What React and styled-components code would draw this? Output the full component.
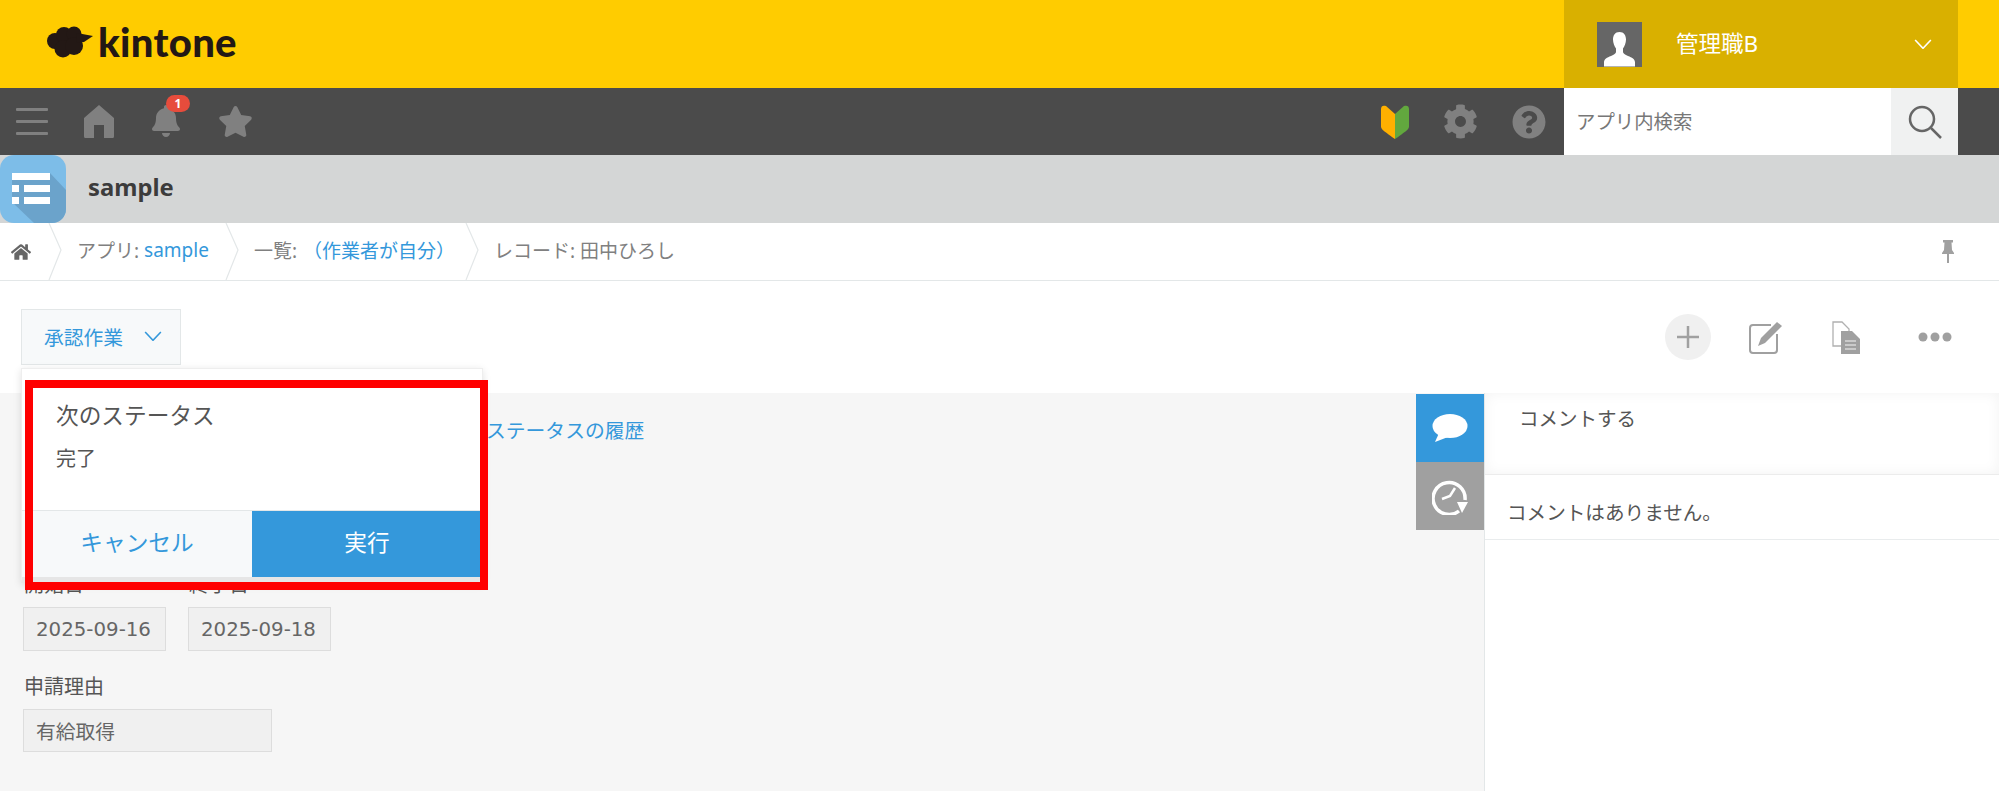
import styled, { createGlobalStyle } from "styled-components";
import { FaBell, FaCog, FaHome, FaQuestionCircle, FaStar } from "react-icons/fa";

const GlobalStyle = createGlobalStyle`
    html, body {
        margin: 0;
        padding: 0;
        height: 100%;
        overflow: hidden;
        background: #fff;
        font-family: "Noto Sans", "Noto Sans CJK JP", sans-serif;
        color: #555;
    }
    * {
        box-sizing: border-box;
    }
`;

const Page = styled.div`
    display: flex;
    flex-direction: column;
    height: 791px;
`;

const Header = styled.div`
    height: 88px;
    background: #ffcc00;
    display: flex;
    justify-content: space-between;
    padding-right: 41px;
`;

const Logo = styled.div`
    display: flex;
    align-items: center;
    gap: 5px;
    padding: 0 0 4px 47px;
    color: #231815;
`;

const LogoText = styled.span`
    font-family: "Lato", sans-serif;
    font-weight: 900;
    font-size: 40px;
    letter-spacing: 0.3px;
`;

const UserMenu = styled.div`
    width: 394px;
    background: #d9b000;
    display: flex;
    align-items: center;
    padding: 0 26px 0 33px;
    color: #fff;
`;

const Avatar = styled.div`
    width: 45px;
    height: 45px;
    background: #666;
    display: flex;
    align-items: flex-end;
    justify-content: center;
`;

const UserName = styled.span`
    flex: 1;
    margin-left: 34px;
    font-size: 22.5px;
    padding-bottom: 4px;
`;

const NavBar = styled.div`
    height: 67px;
    background: #4b4b4b;
    display: flex;
    align-items: center;
    justify-content: space-between;
    padding-right: 41px;
    color: #808080;
`;

const NavGroup = styled.div`
    display: flex;
    align-items: center;
    gap: ${props => props.$gap}px;
    padding-left: ${props => props.$left || 0}px;
`;

const Hamburger = styled.div`
    width: 32px;
    display: flex;
    flex-direction: column;
    gap: 9px;

    span {
        height: 3px;
        background: #808080;
        border-radius: 1px;
    }
`;

const BellWrap = styled.div`
    position: relative;
    height: 33px;
    font-size: 32px;
    line-height: 1;
`;

const Badge = styled.span`
    position: absolute;
    top: -10px;
    left: 16px;
    width: 24px;
    height: 17px;
    border-radius: 9px;
    background: #e74c3c;
    color: #fff;
    font-size: 12px;
    font-weight: 700;
    line-height: 17px;
    text-align: center;
`;

const SearchBox = styled.div`
    width: 394px;
    height: 67px;
    margin-left: -16px;
    display: flex;
    background: #fff;
`;

const SearchText = styled.div`
    flex: 1;
    padding-left: 12px;
    font-size: 19.4px;
    line-height: 67px;
    color: #777;
`;

const SearchButton = styled.div`
    width: 67px;
    background: #f0f1f1;
    display: flex;
    align-items: center;
    justify-content: center;
`;

const AppBar = styled.div`
    height: 68px;
    background: #d4d6d6;
    display: flex;
    align-items: center;
`;

const AppName = styled.h1`
    margin: 0 0 4px 22px;
    font-size: 23.8px;
    font-weight: 700;
    color: #3c3c3c;
`;

const Breadcrumb = styled.div`
    height: 58px;
    background: #fff;
    border-bottom: 1px solid #e3e7e8;
    display: flex;
    align-items: stretch;
    padding-right: 45px;
`;

const HomeCrumb = styled.div`
    width: 48px;
    padding-left: 11px;
    display: flex;
    align-items: center;
    color: #666;
    font-size: 20px;
`;

const Crumb = styled.div`
    width: ${props => props.$width}px;
    padding: 0 0 4px 15px;
    display: flex;
    align-items: center;
    gap: ${props => props.$gap}px;
    font-size: 19px;
    color: #808080;
    white-space: nowrap;
`;

const Link = styled.span`
    color: #3498db;
`;

const PinSlot = styled.div`
    margin-left: auto;
    display: flex;
    align-items: center;
`;

const Toolbar = styled.div`
    height: 112px;
    background: #fff;
    display: flex;
    align-items: center;
    justify-content: space-between;
    padding: 0 47px 0 21px;
    flex-shrink: 0;
    position: relative;
    z-index: 2;
`;

const ActionMenu = styled.div`
    position: relative;
`;

const ActionButton = styled.div`
    width: 160px;
    height: 56px;
    background: #f7f9fa;
    border: 1px solid #e3e7e8;
    display: flex;
    align-items: center;
    gap: 21px;
    padding: 0 0 2px 22px;
    font-size: 19.8px;
    color: #3498db;
`;

const Popup = styled.div`
    position: absolute;
    top: 59px;
    left: 0;
    width: 462px;
    background: #fff;
    border: 1px solid #eee;
    border-bottom: 6px solid #e6e6e6;
    box-shadow: 0 2px 8px rgba(0, 0, 0, 0.12);
`;

const PopupBody = styled.div`
    height: 141px;
    padding: 33px 0 0 34px;
`;

const PopupTitle = styled.div`
    font-size: 22.7px;
    line-height: 28px;
    color: #555;
`;

const PopupStatus = styled.div`
    margin-top: 15px;
    font-size: 20px;
    line-height: 28px;
    color: #555;
`;

const PopupFooter = styled.div`
    height: 67px;
    display: flex;
    border-top: 1px solid #e3e7e8;
`;

const FooterButton = styled.div`
    flex: 1;
    display: flex;
    align-items: center;
    justify-content: center;
    padding-bottom: 6px;
    font-size: 22.7px;
    background: ${props => props.$primary ? "#3498db" : "#f7f9fa"};
    color: ${props => props.$primary ? "#fff" : "#3498db"};
`;

const RedFrame = styled.div`
    position: absolute;
    top: 71px;
    left: 4px;
    width: 463px;
    height: 210px;
    border: 8px solid #ff0000;
`;

const ToolIcons = styled.div`
    display: flex;
    align-items: center;
`;

const ToolIcon = styled.div`
    width: ${props => props.$size || 46}px;
    height: 46px;
    margin-left: ${props => props.$left || 0}px;
    display: flex;
    align-items: center;
    justify-content: center;
    border-radius: 50%;
    background: ${props => props.$filled ? "#f0f0f0" : "transparent"};
`;

const Content = styled.div`
    flex: 1;
    display: flex;
    background: #f6f6f6;
    min-height: 0;
`;

const Main = styled.div`
    flex: 1;
    padding: 25px 0 0 23px;
`;

const StatusLink = styled.div`
    margin-left: 463px;
    font-size: 19.8px;
    line-height: 26px;
    color: #3498db;
`;

const FieldRow = styled.div`
    display: flex;
    gap: 22px;
    margin-top: ${props => props.$top}px;
`;

const Field = styled.div`
    display: flex;
    flex-direction: column;
`;

const FieldLabel = styled.div`
    font-size: 20px;
    line-height: 20px;
    margin: 0 0 12px 1px;
    color: #555;
`;

const FieldValue = styled.div`
    width: ${props => props.$width}px;
    height: ${props => props.$height}px;
    padding-left: 12px;
    display: flex;
    align-items: center;
    background: #f0f0f0;
    border: 1px solid #ddd;
    font-family: "DejaVu Sans", "Noto Sans CJK JP", sans-serif;
    font-size: 19.8px;
    color: #666;
`;

const Tabs = styled.div`
    width: 68px;
    padding-top: 1px;
`;

const Tab = styled.div`
    height: 68px;
    display: flex;
    align-items: center;
    justify-content: center;
    background: ${props => props.$active ? "#3498db" : "#a0a0a0"};
`;

const Sidebar = styled.div`
    width: 515px;
    background: #fff;
    border-left: 1px solid #e3e7e8;
`;

const CommentBox = styled.div`
    height: 82px;
    padding: 13px 0 0 34px;
    font-size: 19.5px;
    line-height: 26px;
    color: #555;
    border-bottom: 1px solid #ececec;
    box-shadow: inset 0 0 14px rgba(0, 0, 0, 0.05);
`;

const NoComments = styled.div`
    height: 65px;
    padding: 25px 0 0 22px;
    font-size: 19.6px;
    line-height: 26px;
    color: #555;
    border-bottom: 1px solid #e9eced;
`;

const CloudLogo = () => (
    <svg width="46" height="32" viewBox="0 0 46 32" fill="currentColor">
        <circle cx="8" cy="15" r="8" />
        <circle cx="17" cy="9" r="8" />
        <circle cx="27" cy="8" r="7.5" />
        <circle cx="16" cy="23" r="8.5" />
        <circle cx="27" cy="20" r="9" />
        <path d="M30 7l16 3-9 6-8 1z" />
    </svg>
);

const UserSilhouette = () => (
    <svg width="35" height="36" viewBox="0 0 35 36" fill="#fff">
        <path d="M17.5 1c-4.5 0-6.5 3.5-6.5 7.5 0 3.5 1.500 7 3 9v3.500c0 1.500-2 2.500-5 4-4 1.500-7 3-7 6.500v4h31v-4c0-3.500-3-5-7-6.500-3-1.500-5-2.500-5-4v-3.500c1.500-2 3-5.500 3-9 0-4-2-7.500-6.500-7.500z" />
    </svg>
);

const Chevron = ({ color, size = 18 }) => (
    <svg width={size} height={size * 0.6} viewBox="0 0 18 11" fill="none" stroke={color} strokeWidth="1.6">
        <path d="M1 1l8 8.500 8-8.500" />
    </svg>
);

const HouseIcon = () => (
    <svg width="30" height="33" viewBox="0 0 30 33" fill="#808080">
        <path d="M15 0L30 13V31.500a1.500 1.500 0 0 1-1.500 1.500H20V20H10V33H1.500A1.500 1.500 0 0 1 0 31.500V13Z" />
    </svg>
);

const BeginnerMark = () => (
    <svg width="28" height="34" viewBox="0 0 28 34">
        <path d="M14 9L5 1C2 0 0 1 0 4V21C0 24 1 25 14 34Z" fill="#ffb000" />
        <path d="M14 9L23 1C26 0 28 1 28 4V21C28 24 27 25 14 34Z" fill="#62a83e" />
    </svg>
);

const SearchIcon = () => (
    <svg width="34" height="34" viewBox="0 0 34 34" fill="none" stroke="#666" strokeWidth="2.500">
        <circle cx="14" cy="14" r="12" />
        <path d="M23 23l10 10" />
    </svg>
);

const AppIcon = () => (
    <svg width="66" height="68" viewBox="0 0 66 68">
        <rect width="66" height="68" rx="14" fill="#7dbde8" />
        <path d="M50 18L66 35V54a14 14 0 0 1-14 14H34L12 47V18Z" fill="#6ba3cb" />
        <path d="M12 18H50V25H12ZM12 30H19V37H12ZM24 30H50V37H24ZM12 42H19V49H12ZM24 42H50V49H24Z" fill="#fff" />
    </svg>
);

const CrumbSeparator = () => (
    <svg width="14" height="57" viewBox="0 0 14 57" fill="none" stroke="#e3e7e8" strokeWidth="1.200">
        <path d="M1 0l12 27L1 57" />
    </svg>
);

const PinIcon = () => (
    <svg width="12" height="23" viewBox="0 0 12 23" fill="#a0a0a0">
        <path d="M1 0H11V2.500H9.500L10 10L12 13V14H7V23H5V14H0V13L2 10L2.500 2.500H1Z" />
    </svg>
);

const PlusIcon = () => (
    <svg width="24" height="24" viewBox="0 0 24 24" fill="none" stroke="#a0a0a0" strokeWidth="2.500">
        <path d="M12 1V23M1 12H23" />
    </svg>
);

const EditIcon = () => (
    <svg width="34" height="33" viewBox="0 0 34 33" fill="none">
        <path d="M22 4H4a3 3 0 0 0-3 3V29a3 3 0 0 0 3 3H25a3 3 0 0 0 3-3V13" stroke="#a0a0a0" strokeWidth="2" />
        <path d="M28 1L33 5L16 22L9 25L12 17Z" fill="#a0a0a0" />
    </svg>
);

const DocsIcon = () => (
    <svg width="28" height="33" viewBox="0 0 28 33" fill="none">
        <path d="M1 1H10L17 8V25H1Z" fill="#fff" stroke="#b0b0b0" strokeWidth="1.300" />
        <path d="M9 10H20L28 18V33H9Z" fill="#a0a0a0" />
        <path d="M13 20H24M13 24H24M13 28H24" stroke="#d8d8d8" strokeWidth="1.500" />
    </svg>
);

const DotsIcon = () => (
    <svg width="34" height="10" viewBox="0 0 34 10" fill="#a0a0a0">
        <circle cx="5" cy="5" r="4.500" />
        <circle cx="17" cy="5" r="4.500" />
        <circle cx="29" cy="5" r="4.500" />
    </svg>
);

const CommentIcon = () => (
    <svg width="36" height="28" viewBox="0 0 36 28" fill="#fff">
        <ellipse cx="18" cy="12" rx="17.500" ry="12" />
        <path d="M7 19L3 28L16 23Z" />
    </svg>
);

const HistoryIcon = () => (
    <svg width="36" height="37" viewBox="0 0 36 37" fill="none" stroke="#fff">
        <path d="M27 33A16 16 0 1 1 33 22" strokeWidth="3.500" />
        <path d="M10 21L18 18L23 10" strokeWidth="2.500" />
        <path d="M25 24H36L30 35Z" fill="#fff" stroke="none" />
    </svg>
);

const App = () => {
    return (
        <Page>
            <GlobalStyle />
            <Header>
                <Logo>
                    <CloudLogo />
                    <LogoText>kintone</LogoText>
                </Logo>
                <UserMenu>
                    <Avatar><UserSilhouette /></Avatar>
                    <UserName>管理職B</UserName>
                    <Chevron color="#fff" />
                </UserMenu>
            </Header>
            <NavBar>
                <NavGroup $left={16} $gap={36}>
                    <Hamburger><span /><span /><span /></Hamburger>
                    <HouseIcon />
                    <BellWrap>
                        <FaBell size={32} />
                        <Badge>1</Badge>
                    </BellWrap>
                    <FaStar size={35} />
                </NavGroup>
                <NavGroup $gap={34}>
                    <BeginnerMark />
                    <FaCog size={35} />
                    <FaQuestionCircle size={34} />
                    <SearchBox>
                        <SearchText>アプリ内検索</SearchText>
                        <SearchButton><SearchIcon /></SearchButton>
                    </SearchBox>
                </NavGroup>
            </NavBar>
            <AppBar>
                <AppIcon />
                <AppName>sample</AppName>
            </AppBar>
            <Breadcrumb>
                <HomeCrumb><FaHome /></HomeCrumb>
                <CrumbSeparator />
                <Crumb $width={163} $gap={5}>アプリ: <Link>sample</Link></Crumb>
                <CrumbSeparator />
                <Crumb $width={226} $gap={6}>一覧: <Link>（作業者が自分）</Link></Crumb>
                <CrumbSeparator />
                <Crumb $width={300} $gap={5}>レコード: 田中ひろし</Crumb>
                <PinSlot><PinIcon /></PinSlot>
            </Breadcrumb>
            <Toolbar>
                <ActionMenu>
                    <ActionButton>
                        承認作業
                        <Chevron color="#3498db" />
                    </ActionButton>
                    <Popup>
                        <PopupBody>
                            <PopupTitle>次のステータス</PopupTitle>
                            <PopupStatus>完了</PopupStatus>
                        </PopupBody>
                        <PopupFooter>
                            <FooterButton>キャンセル</FooterButton>
                            <FooterButton $primary>実行</FooterButton>
                        </PopupFooter>
                    </Popup>
                    <RedFrame />
                </ActionMenu>
                <ToolIcons>
                    <ToolIcon $filled><PlusIcon /></ToolIcon>
                    <ToolIcon $left={38} $size={34}><EditIcon /></ToolIcon>
                    <ToolIcon $left={49} $size={28}><DocsIcon /></ToolIcon>
                    <ToolIcon $left={58} $size={34}><DotsIcon /></ToolIcon>
                </ToolIcons>
            </Toolbar>
            <Content>
                <Main>
                    <StatusLink>ステータスの履歴</StatusLink>
                    <FieldRow $top={131}>
                        <Field>
                            <FieldLabel>開始日</FieldLabel>
                            <FieldValue $width={143} $height={44}>2025-09-16</FieldValue>
                        </Field>
                        <Field>
                            <FieldLabel>終了日</FieldLabel>
                            <FieldValue $width={143} $height={44}>2025-09-18</FieldValue>
                        </Field>
                    </FieldRow>
                    <FieldRow $top={26}>
                        <Field>
                            <FieldLabel>申請理由</FieldLabel>
                            <FieldValue $width={249} $height={43}>有給取得</FieldValue>
                        </Field>
                    </FieldRow>
                </Main>
                <Tabs>
                    <Tab $active><CommentIcon /></Tab>
                    <Tab><HistoryIcon /></Tab>
                </Tabs>
                <Sidebar>
                    <CommentBox>コメントする</CommentBox>
                    <NoComments>コメントはありません。</NoComments>
                </Sidebar>
            </Content>
        </Page>
    );
};

export default App;
